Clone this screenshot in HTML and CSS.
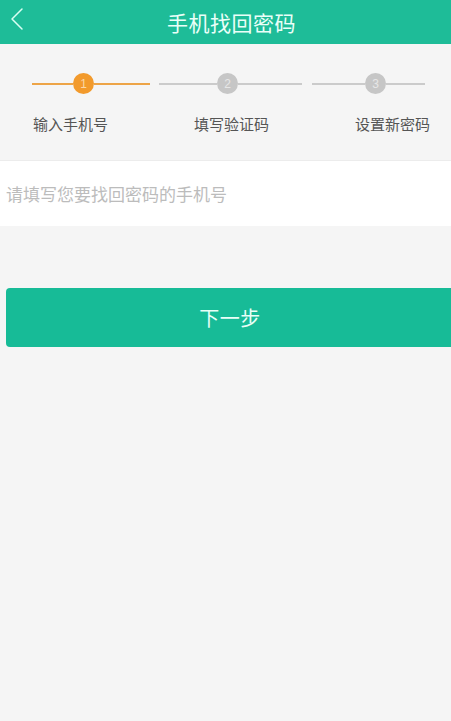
FILE: index.html
```html
<!DOCTYPE html>
<html lang="zh-CN">
<head>
<meta charset="utf-8">
<title>手机找回密码</title>
<link rel="stylesheet" href="styles.css">
</head>
<body>
<div class="page">
  <header class="topbar">
    <span class="back">
      <svg width="16" height="24" viewBox="0 0 16 24"><path d="M13 2 L3 12 L13 22" fill="none" stroke="#d9fff3" stroke-width="1.5" stroke-linecap="round" stroke-linejoin="round"/></svg>
    </span>
    <h1 class="title">手机找回密码</h1>
  </header>

  <section class="steps">
    <div class="step step-1 active">
      <div class="track"><span class="line lead"></span><span class="dot">1</span><span class="line tail"></span></div>
      <div class="label">输入手机号</div>
    </div>
    <div class="step step-2">
      <div class="track"><span class="line lead"></span><span class="dot">2</span><span class="line tail"></span></div>
      <div class="label">填写验证码</div>
    </div>
    <div class="step step-3">
      <div class="track"><span class="line lead"></span><span class="dot">3</span><span class="line tail"></span></div>
      <div class="label">设置新密码</div>
    </div>
  </section>

  <div class="field">
    <input class="phone" type="text" placeholder="请填写您要找回密码的手机号">
  </div>

  <button class="next" type="button">下一步</button>
</div>
</body>
</html>
```

FILE: styles.css
```css
* { box-sizing: border-box; }
html, body { margin: 0; padding: 0; }
body {
  background: #f5f5f5;
  font-family: "Noto Sans CJK SC", "Noto Sans", sans-serif;
  width: 451px;
  height: 721px;
  overflow: hidden;
}
.page { display: flex; flex-direction: column; }

.topbar {
  height: 44px;
  background: #1ebc98;
  display: flex;
  align-items: center;
  justify-content: center;
  position: relative;
}
.back {
  position: absolute;
  left: 9px;
  top: 7px;
  display: flex;
}
.title {
  margin: 0 0 0 12px;
  font-size: 21px;
  font-weight: normal;
  color: #eafff8;
  letter-spacing: 0.5px;
  line-height: 1;
}

.steps {
  display: flex;
  padding: 29px 0 0 32px;
  height: 116px;
}
.step { display: flex; flex-direction: column; }
.step-1 { width: 118px; }
.step-2 { width: 143px; margin-left: 9px; }
.step-3 { width: 113px; margin-left: 10px; }
.track {
  display: flex;
  align-items: center;
  height: 21px;
}
.line { height: 2px; background: #cbcbcb; }
.line.tail { flex: 1; }
.step-1 .lead { width: 41px; }
.step-2 .lead { width: 58px; }
.step-3 .lead { width: 53px; }
.dot {
  width: 21px;
  height: 21px;
  border-radius: 50%;
  background: #c6c6c6;
  color: #e6e6e6;
  font-family: "Liberation Sans", sans-serif;
  font-size: 12px;
  display: flex;
  align-items: center;
  justify-content: center;
}
.active .line { background: #eda447; }
.active .dot { background: #f29a2c; color: #fbd7a6; }
.label {
  margin-top: 22px;
  font-size: 15px;
  color: #555;
  line-height: 1;
  white-space: nowrap;
}
.step-1 .label { padding-left: 1px; }
.step-2 .label { padding-left: 35px; }
.step-3 .label { padding-left: 43px; }

.field {
  height: 66px;
  background: #fff;
  border-top: 1px solid #ececec;
  display: flex;
  align-items: center;
}
.phone {
  border: none;
  outline: none;
  background: transparent;
  width: 100%;
  padding: 0 0 0 6px;
  font-family: "Noto Sans CJK SC", "Noto Sans", sans-serif;
  font-size: 17px;
  color: #333;
}
.phone::placeholder { color: #bcbcbc; }

.next {
  margin: 62px -3px 0 6px;
  height: 59px;
  border: none;
  border-radius: 4px;
  background: #17bb97;
  color: #e8fff7;
  font-family: "Noto Sans CJK SC", "Noto Sans", sans-serif;
  font-size: 20px;
  letter-spacing: 0.5px;
}
```
